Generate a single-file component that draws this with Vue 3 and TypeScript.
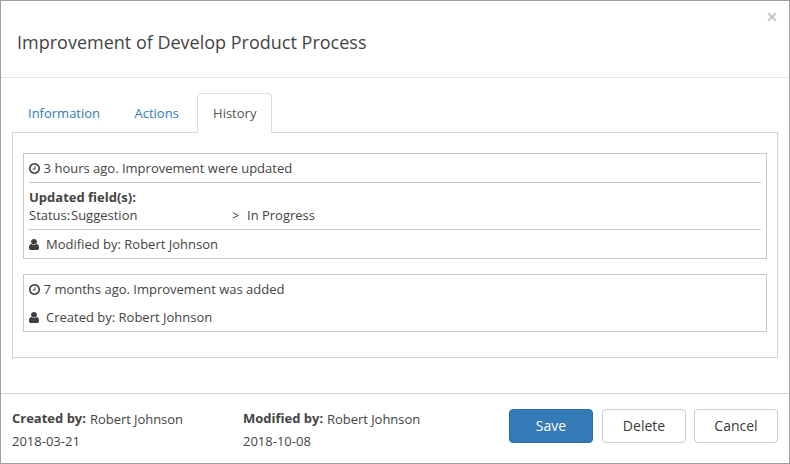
<script setup lang="ts">
import { ref } from 'vue'

interface Entry {
  title: string
  author: string
  change?: { field: string; from: string; to: string }
}

const tabs: string[] = ['Information', 'Actions', 'History']
const active = ref('History')

const entries: Entry[] = [
  {
    title: '3 hours ago. Improvement were updated',
    author: 'Modified by: Robert Johnson',
    change: { field: 'Status:', from: 'Suggestion', to: 'In Progress' },
  },
  { title: '7 months ago. Improvement was added', author: 'Created by: Robert Johnson' },
]

const audit = [
  { label: 'Created by:', name: 'Robert Johnson', date: '2018-03-21' },
  { label: 'Modified by:', name: 'Robert Johnson', date: '2018-10-08' },
]
</script>

<template>
  <div class="modal">
    <header class="header">
      <h1 class="title">Improvement of Develop Product Process</h1>
      <button class="close" aria-label="Close">
        <svg viewBox="0 0 10 10"><path d="M1.2 1.2 8.8 8.8M8.8 1.2 1.2 8.8" /></svg>
      </button>
    </header>

    <main class="body">
      <nav class="tabs">
        <button
          v-for="tab in tabs"
          :key="tab"
          class="tab"
          :class="{ active: tab === active }"
          @click="active = tab"
        >{{ tab }}</button>
      </nav>
      <div class="panel">
        <section v-for="entry in entries" :key="entry.title" class="entry">
          <div class="line">
            <svg class="clock" viewBox="0 128 1536 1536">
              <path d="M896 544v448q0 14-9 23t-23 9h-320q-14 0-23-9t-9-23v-64q0-14 9-23t23-9h224v-352q0-14 9-23t23-9h64q14 0 23 9t9 23zm416 352q0-148-73-273t-198-198-273-73-273 73-198 198-73 273 73 273 198 198 273 73 273-73 198-198 73-273zm224 0q0 209-103 385.5t-279.5 279.5-385.5 103-385.5-103-279.5-279.5-103-385.5 103-385.5 279.5-279.5 385.5-103 385.5 103 279.5 279.5 103 385.5z" />
            </svg>
            <span>{{ entry.title }}</span>
          </div>
          <div v-if="entry.change" class="changes">
            <div class="changes-title">Updated field(s):</div>
            <div class="change">
              <span class="field">{{ entry.change.field }}</span>
              <span class="from">{{ entry.change.from }}</span>
              <span class="arrow">&gt;</span>
              <span>{{ entry.change.to }}</span>
            </div>
          </div>
          <div class="line author">
            <svg class="user" viewBox="0 128 1280 1536" preserveAspectRatio="none">
              <path d="M1280 1399q0 109-62.5 187t-150.5 78h-854q-88 0-150.5-78t-62.5-187q0-85 8.5-160.5t31.5-152 58.5-131 94-89 134.5-34.5q131 128 313 128t313-128q76 0 134.5 34.5t94 89 58.5 131 31.5 152 8.5 160.5zm-256-887q0 159-112.5 271.5t-271.5 112.5-271.5-112.5-112.5-271.5 112.5-271.5 271.5-112.5 271.5 112.5 112.5 271.5z" />
            </svg>
            <span>{{ entry.author }}</span>
          </div>
        </section>
      </div>
    </main>

    <footer class="footer">
      <div v-for="item in audit" :key="item.label" class="audit">
        <div class="who"><b>{{ item.label }}</b><span>{{ item.name }}</span></div>
        <div class="date">{{ item.date }}</div>
      </div>
      <div class="buttons">
        <button class="btn primary">Save</button>
        <button class="btn">Delete</button>
        <button class="btn">Cancel</button>
      </div>
    </footer>
  </div>
</template>

<style scoped>
.modal {
  box-sizing: border-box;
  width: 790px;
  height: 464px;
  border: 1px solid #a0a0a0;
  background: #fff;
  color: #444;
  font: 13px/18px "Open Sans", sans-serif;
  display: flex;
  flex-direction: column;
}
button {
  font: inherit;
  color: inherit;
  background: none;
  border: 0;
  margin: 0;
  padding: 0;
}
.header {
  box-sizing: border-box;
  height: 77px;
  flex: none;
  display: flex;
  justify-content: space-between;
  align-items: flex-start;
  padding: 10px 12px 0 16px;
  border-bottom: 1px solid #e5e5e5;
}
.title {
  margin: 18px 0 0;
  font-size: 18px;
  line-height: 26px;
  font-weight: 400;
}
.close {
  display: flex;
}
.close svg {
  width: 10px;
  height: 10px;
  margin-top: 1px;
  fill: none;
  stroke: #c8c8c8;
  stroke-width: 2.2;
}
.body {
  flex: 1;
  padding: 15px 11px 0;
}
.tabs {
  display: flex;
  height: 40px;
  gap: 2.4px;
}
.tab {
  box-sizing: border-box;
  height: 40px;
  padding: 0 15px 1px;
  border: 1px solid transparent;
  border-radius: 4px 4px 0 0;
  color: #337ab7;
}
.tab.active {
  width: 75px;
  padding: 0 0 1px;
  color: #555;
  border-color: #ddd;
  border-bottom: 0;
  background: #fff;
  z-index: 1;
}
.panel {
  box-sizing: border-box;
  height: 226px;
  margin-top: -1px;
  border: 1px solid #d3d3d3;
  padding: 20px 10px 0;
  display: flex;
  flex-direction: column;
  gap: 15px;
}
.entry {
  border: 1px solid #c8c8c8;
  padding: 5px;
}
.line {
  display: flex;
  align-items: center;
  height: 18px;
}
.clock {
  width: 11px;
  height: 11px;
  margin: 1px 3.6px 0 0;
  fill: #3e3e3e;
}
.user {
  width: 10px;
  height: 11px;
  margin: 1px 7px 0 0;
  fill: #3e3e3e;
}
.author {
  margin-top: 10px;
}
.changes {
  margin-top: 5px;
  padding: 5px 0;
  border: 1px solid #c8c8c8;
  border-width: 1px 0;
}
.changes + .author {
  margin-top: 5px;
}
.changes-title {
  font-weight: 700;
}
.change {
  display: flex;
}
.field {
  width: 42px;
}
.from {
  width: 161px;
}
.arrow {
  width: 15px;
}
.footer {
  box-sizing: border-box;
  height: 70px;
  flex: none;
  border-top: 1px solid #d3d3d3;
  display: flex;
  padding: 15px 11px 0;
}
.audit {
  width: 231px;
}
.who {
  display: flex;
  gap: 4px;
  height: 22px;
}
.who span {
  padding-top: 1px;
  letter-spacing: -0.05px;
}
.audit .date {
  padding-top: 1px;
}
.buttons {
  display: flex;
  gap: 8px;
  margin-left: auto;
}
.btn {
  box-sizing: border-box;
  width: 84px;
  height: 34px;
  border: 1px solid #ccc;
  border-radius: 4px;
  font-size: 14px;
  line-height: 20px;
  color: #3a3a3a;
}
.btn.primary {
  background: #337ab7;
  border-color: #2e6da4;
  color: #fff;
  margin-right: 1px;
}
</style>
